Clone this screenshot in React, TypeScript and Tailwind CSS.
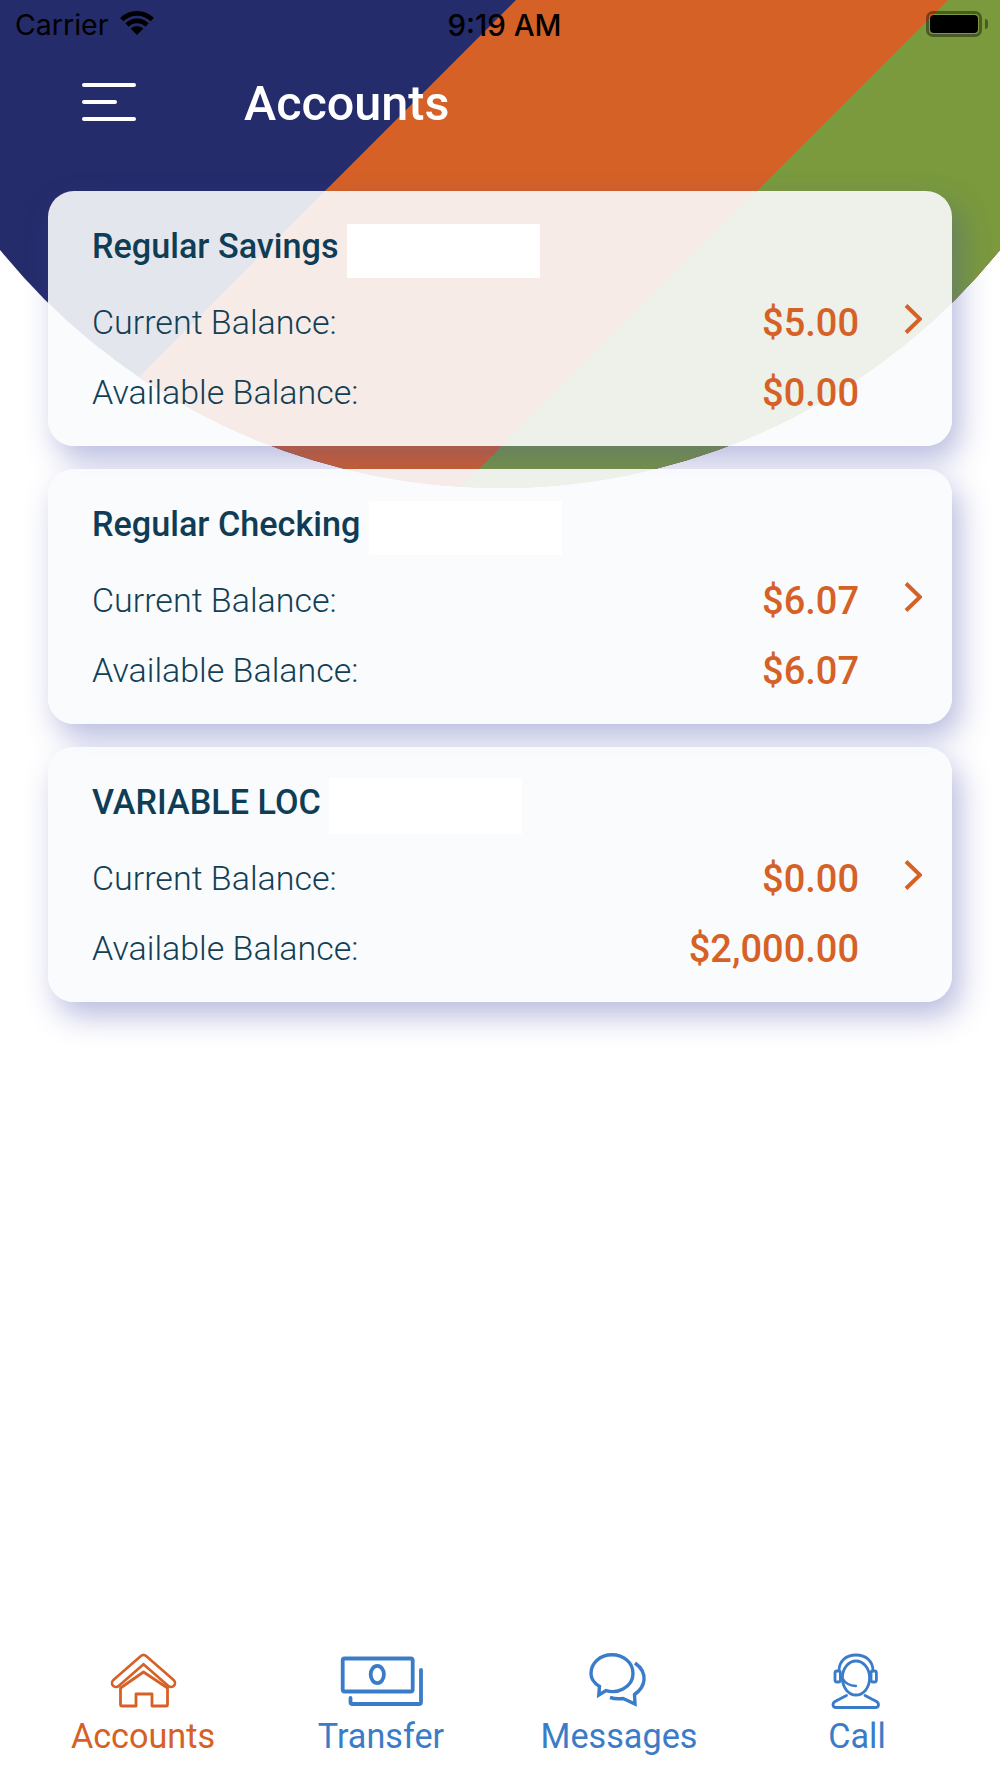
const cards = [
  { title: "Regular Savings", current: "$5.00", available: "$0.00", block: "ml-[8px] mt-[2px] h-[54px]" },
  { title: "Regular Checking", current: "$6.07", available: "$6.07", block: "ml-[9px] mt-[0px] h-[54px]" },
  { title: "VARIABLE LOC", current: "$0.00", available: "$2,000.00", block: "ml-[8px] mt-[0px] h-[56px]" },
];

function Backdrop() {
  return (
    <svg className="absolute left-0 top-0" width="1000" height="500" viewBox="0 0 1000 500">
      <defs>
        <clipPath id="dome">
          <circle cx="500" cy="-156" r="644" />
        </clipPath>
      </defs>
      <g clipPath="url(#dome)">
        <rect x="0" y="0" width="1000" height="500" fill="#252c6b" />
        <polygon points="516,0 1000,0 1000,500 16,500" fill="#d66126" />
        <polygon points="948,0 1000,0 1000,500 448,500" fill="#7a9a3d" />
      </g>
    </svg>
  );
}

function Wifi() {
  return (
    <svg width="56" height="40" viewBox="0 0 56 40" className="ml-[1px]">
      <g fill="none" stroke="#000" strokeWidth="4.6">
        <path d="M12.7 15.7A21.6 21.6 0 0 1 43.3 15.7" />
        <path d="M18 21A14.2 14.2 0 0 1 38 21" />
      </g>
      <path d="M28 31L21.6 24.6A9 9 0 0 1 34.4 24.6Z" fill="#000" />
    </svg>
  );
}

function Battery() {
  return (
    <div className="flex items-center">
      <div className="h-[26px] w-[56px] rounded-[7px] border-[3px] border-black/40 p-[1px]">
        <div className="h-full w-full rounded-[4px] bg-black" />
      </div>
      <div className="ml-[3px] h-[10px] w-[3px] rounded-r-[3px] bg-black/40" />
    </div>
  );
}

function Chevron() {
  return (
    <svg width="18" height="30" viewBox="0 0 18 30" className="-mt-[7px]">
      <path d="M2 1.5L16 15L2 28.5" fill="none" stroke="#d66126" strokeWidth="4" />
    </svg>
  );
}

function HomeIcon() {
  return (
    <svg width="90" height="70" viewBox="-2 0 90 70" fill="none" stroke="#d66126">
      <path d="M16 37L43.5 13L71 37" strokeWidth="10.6" strokeLinecap="round" strokeLinejoin="round" />
      <path d="M16 37L43.5 13L71 37" stroke="#fff" strokeWidth="5.4" strokeLinecap="round" strokeLinejoin="round" />
      <path
        d="M20.5 42L43.5 26L67.5 42V58.5a1.5 1.5 0 0 1-1.5 1.5H52V48H36V60H22a1.5 1.5 0 0 1-1.5-1.5Z"
        strokeWidth="2.8"
        strokeLinejoin="round"
      />
    </svg>
  );
}

function TransferIcon() {
  return (
    <svg width="90" height="70" viewBox="1 0 90 70" fill="none" stroke="#3b7cc9" strokeWidth="3.8">
      <rect x="7.7" y="12.5" width="70" height="33" rx="2" />
      <ellipse cx="42.3" cy="28.5" rx="6.6" ry="8.6" />
      <path d="M15.5 52V56a2 2 0 0 0 2 2H84a2 2 0 0 0 2-2V24" strokeLinecap="round" />
    </svg>
  );
}

function MessagesIcon() {
  return (
    <svg width="90" height="70" viewBox="-6 0 90 70" fill="none" stroke="#3b7cc9" strokeWidth="3.4">
      <path d="M26 44.6C31 46 38 45.8 43 43C49.5 39.5 53 33.5 53 27.5C53 16.5 43.5 8.8 32 8.8C20 8.8 11 17 11 27.5C11 32.8 14 37 19.5 40.5L18.8 49Z" strokeLinejoin="miter" />
      <path d="M55 17C62 22 64.5 28 64 34C63.5 40 59.5 45 54.5 48.5L55 58L43 52.5C39 53 35 53 30 51.5" strokeLinejoin="miter" />
    </svg>
  );
}

function CallIcon() {
  return (
    <svg width="90" height="70" viewBox="-3 0 90 70" fill="none" stroke="#3b7cc9" strokeWidth="2.8">
      <ellipse cx="41" cy="32" rx="13.6" ry="17" />
      <path d="M24 25C24 15 31 9 41 9C51 9 58 15 58 25" />
      <rect x="20" y="25" width="5.4" height="11" rx="2" />
      <rect x="56" y="25" width="5.4" height="11" rx="2" />
      <path d="M28 33C30 37 34 39.5 41 40" strokeWidth="2.4" strokeLinecap="round" />
      <path d="M31.5 49.5L20 55.5C17 57.5 17.5 61.5 21 61.5H60.5C64 61.5 64.5 57.5 61.5 55.5L50 49.5" strokeLinecap="round" />
    </svg>
  );
}

const tabs = [
  { label: "Accounts", icon: <HomeIcon />, color: "text-[#d66126]" },
  { label: "Transfer", icon: <TransferIcon />, color: "text-[#3b7cc9]" },
  { label: "Messages", icon: <MessagesIcon />, color: "text-[#3b7cc9]" },
  { label: "Call", icon: <CallIcon />, color: "text-[#3b7cc9]" },
];

function Row({ label, value, chevron }: { label: string; value: string; chevron?: boolean }) {
  return (
    <div className="flex h-[70px] items-center">
      <span className="flex-1 text-[34px] font-light text-[#123f55]">{label}</span>
      <span className="mt-[2px] text-[38px] font-medium text-[#d66126]">{value}</span>
      <div className="ml-[45px] flex w-[18px] items-center">{chevron && <Chevron />}</div>
    </div>
  );
}

export default function App() {
  return (
    <div className="relative flex h-[1778px] w-[1000px] flex-col overflow-hidden bg-white font-['Roboto',sans-serif]">
      <Backdrop />
      <div className="relative flex h-[48px] items-center font-['Inter',sans-serif] text-[28.5px] text-black">
        <div className="flex flex-1 items-center pl-[15px]">
          <span className="mt-[2px]">Carrier</span>
          <Wifi />
        </div>
        <span className="ml-[6px] mt-[2px] text-[29.5px] font-medium">9:19 AM</span>
        <div className="flex flex-1 justify-end pr-[12px]">
          <Battery />
        </div>
      </div>
      <div className="relative flex h-[110px] items-center pl-[82px] text-white">
        <div className="-mt-[3px] flex w-[54px] flex-col gap-[13px]">
          <div className="h-[4px] w-[54px] rounded-full bg-white" />
          <div className="h-[4px] w-[35px] rounded-full bg-white" />
          <div className="h-[4px] w-[54px] rounded-full bg-white" />
        </div>
        <span className="ml-[108px] mt-[2px] text-[48.5px] font-medium">Accounts</span>
      </div>
      <div className="relative mt-[33px] flex flex-col gap-[23px] px-[48px]">
        {cards.map((c) => (
          <div
            key={c.title}
            className="h-[255px] rounded-[26px] bg-[rgba(250,251,253,0.9)] pl-[44px] pr-[30px] pt-[32px] shadow-[8px_14px_30px_rgba(70,80,170,0.38)]"
          >
            <div className="mb-[10px] flex h-[54px] items-center">
              <span className="-mt-[6px] text-[34.2px] font-medium text-[#0f3d55]">{c.title}</span>
              <div className={`w-[193px] bg-white ${c.block}`} />
            </div>
            <Row label="Current Balance:" value={c.current} chevron />
            <Row label="Available Balance:" value={c.available} />
          </div>
        ))}
      </div>
      <div className="relative mt-auto grid grid-cols-4 px-[24px] pb-[21px]">
        {tabs.map((t) => (
          <div key={t.label} className="flex flex-col items-center">
            {t.icon}
            <span className={`h-[41px] text-[34.2px] leading-[41px] ${t.color}`}>{t.label}</span>
          </div>
        ))}
      </div>
    </div>
  );
}
